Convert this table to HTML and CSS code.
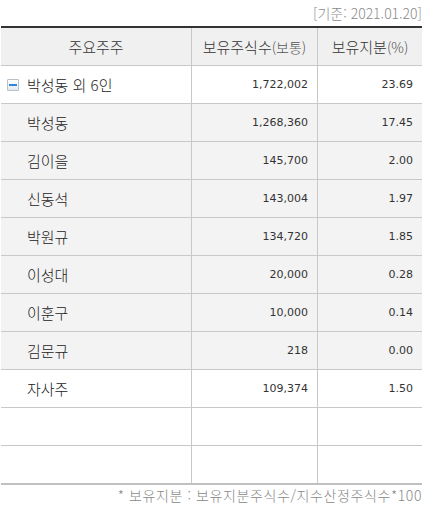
FILE: index.html
```html
<!DOCTYPE html>
<html lang="ko">
<head>
<meta charset="utf-8">
<link rel="stylesheet" href="styles.css">
</head>
<body>
<div class="wrap">
  <div class="date">[기준: 2021.01.20]</div>
  <div class="tbl">
    <div class="row head">
      <div class="c c1">주요주주</div>
      <div class="c c2">보유주식수<span class="paren">(보통)</span></div>
      <div class="c c3">보유지분<span class="paren">(%)</span></div>
    </div>
    <div class="row">
      <div class="c c1 name"><span class="toggle"><span class="bar"></span></span>박성동 외 6인</div>
      <div class="c c2 num">1,722,002</div>
      <div class="c c3 num">23.69</div>
    </div>
    <div class="row sub">
      <div class="c c1 name">박성동</div>
      <div class="c c2 num">1,268,360</div>
      <div class="c c3 num">17.45</div>
    </div>
    <div class="row sub">
      <div class="c c1 name">김이을</div>
      <div class="c c2 num">145,700</div>
      <div class="c c3 num">2.00</div>
    </div>
    <div class="row sub">
      <div class="c c1 name">신동석</div>
      <div class="c c2 num">143,004</div>
      <div class="c c3 num">1.97</div>
    </div>
    <div class="row sub">
      <div class="c c1 name">박원규</div>
      <div class="c c2 num">134,720</div>
      <div class="c c3 num">1.85</div>
    </div>
    <div class="row sub">
      <div class="c c1 name">이성대</div>
      <div class="c c2 num">20,000</div>
      <div class="c c3 num">0.28</div>
    </div>
    <div class="row sub">
      <div class="c c1 name">이훈구</div>
      <div class="c c2 num">10,000</div>
      <div class="c c3 num">0.14</div>
    </div>
    <div class="row sub">
      <div class="c c1 name">김문규</div>
      <div class="c c2 num">218</div>
      <div class="c c3 num">0.00</div>
    </div>
    <div class="row">
      <div class="c c1 name">자사주</div>
      <div class="c c2 num">109,374</div>
      <div class="c c3 num">1.50</div>
    </div>
    <div class="row">
      <div class="c c1"></div>
      <div class="c c2"></div>
      <div class="c c3"></div>
    </div>
    <div class="row last">
      <div class="c c1"></div>
      <div class="c c2"></div>
      <div class="c c3"></div>
    </div>
  </div>
  <div class="note">* 보유지분 : 보유지분주식수/지수산정주식수*100</div>
</div>
</body>
</html>
```
FILE: styles.css
```css
html, body {
  margin: 0;
  padding: 0;
  background: #fff;
}
body {
  font-family: "Noto Sans CJK KR", "Noto Sans", sans-serif;
  font-weight: 300;
  color: #333;
}
.wrap {
  width: 421px;
  margin-left: 1px;
}
.date {
  height: 26px;
  line-height: 26px;
  text-align: right;
  font-size: 14px;
  color: #8a8a8a;
}
.tbl {
  border-top: 2px solid #333;
}
.row {
  display: grid;
  grid-template-columns: 191px 126px 104px;
  height: 38px;
  border-bottom: 1px solid #c8c8c8;
  box-sizing: border-box;
  background: #fff;
}
.row.last {
  border-bottom: 2px solid #c0c0c0;
  height: 39px;
}
.row.head {
  background: #f0f0f0;
}
.row.sub {
  background: #f3f3f3;
}
.c {
  box-sizing: border-box;
  border-right: 1px solid #c8c8c8;
  display: flex;
  align-items: center;
  font-size: 15px;
  white-space: nowrap;
}
.c3 {
  border-right: none;
}
.head .c {
  justify-content: center;
  color: #333;
}
.paren {
  font-size: 14px;
  color: #555;
}
.name {
  padding-left: 26px;
  position: relative;
  color: #222;
}
.num {
  justify-content: flex-end;
  padding-right: 9px;
  font-family: "DejaVu Sans", sans-serif;
  font-weight: 400;
  font-size: 11px;
  color: #333;
}
.toggle {
  position: absolute;
  left: 6px;
  top: 13px;
  width: 12px;
  height: 12px;
  box-sizing: border-box;
  border: 1px solid #b8c0c8;
  border-radius: 1px;
  background: linear-gradient(#ffffff, #e4e8ec);
  display: flex;
  align-items: center;
  justify-content: center;
}
.bar {
  width: 8px;
  height: 2px;
  background: #2f86de;
}
.note {
  text-align: right;
  font-size: 14px;
  line-height: 20px;
  color: #888;
  letter-spacing: 0.6px;
}
```
